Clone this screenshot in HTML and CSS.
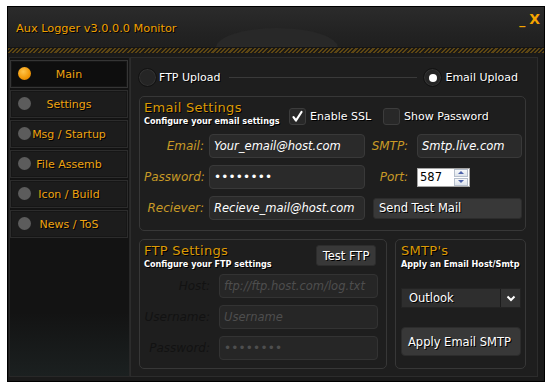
FILE: index.html
```html
<!DOCTYPE html>
<html lang="en">
<head>
<meta charset="utf-8">
<title>Aux Logger v3.0.0.0 Monitor</title>
<link rel="stylesheet" href="styles.css">
</head>
<body>
<div class="window">
  <header class="titlebar">
    <div class="dome"></div>
    <span class="title">Aux Logger v3.0.0.0 Monitor</span>
    <div class="winctl"><span class="min">_</span><span class="close">X</span></div>
  </header>
  <div class="hatch"></div>
  <div class="body">
    <nav class="sidebar">
      <div class="nav-item active"><span class="dot"></span><span>Main</span></div>
      <div class="nav-item"><span class="dot"></span><span>Settings</span></div>
      <div class="nav-item"><span class="dot"></span><span>Msg / Startup</span></div>
      <div class="nav-item"><span class="dot"></span><span>File Assemb</span></div>
      <div class="nav-item"><span class="dot"></span><span>Icon / Build</span></div>
      <div class="nav-item"><span class="dot"></span><span>News / ToS</span></div>
    </nav>
    <main class="panel">
      <div class="mode-row">
        <span class="radio"></span><span class="radio-label">FTP Upload</span>
        <span class="mode-line"></span>
        <span class="radio checked"></span><span class="radio-label last">Email Upload</span>
      </div>

      <section class="group email">
        <div class="group-head">
          <div class="head-text">
            <h2 class="group-title">Email Settings</h2>
            <p class="group-sub">Configure your email settings</p>
          </div>
          <label class="check"><span class="box"><svg width="15" height="15" viewBox="0 0 15 15"><path d="M3.5 8.2 L6 11.5 L11.5 3" fill="none" stroke="#fff" stroke-width="2.2" stroke-linecap="round" stroke-linejoin="round"/></svg></span>Enable SSL</label>
          <label class="check second"><span class="box"></span>Show Password</label>
        </div>
        <div class="form email-form">
          <span class="lbl">Email:</span><span class="field">Your_email@host.com</span>
          <span class="lbl lbl2">SMTP:</span><span class="field">Smtp.live.com</span>
          <span class="lbl">Password:</span><span class="field dots">••••••••</span>
          <span class="lbl lbl2">Port:</span>
          <span class="spin"><span class="spin-val">587</span><span class="spin-btns"><span class="sb up"></span><span class="sb down"></span></span></span>
          <span class="lbl">Reciever:</span><span class="field">Recieve_mail@host.com</span>
          <button class="btn send">Send Test Mail</button>
        </div>
      </section>

      <div class="lower">
        <section class="group ftp">
          <div class="group-head">
            <div class="head-text">
              <h2 class="group-title">FTP Settings</h2>
              <p class="group-sub">Configure your FTP settings</p>
            </div>
            <button class="btn test">Test FTP</button>
          </div>
          <div class="form ftp-form">
            <span class="lbl dis">Host:</span><span class="field off">ftp://ftp.host.com/log.txt</span>
            <span class="lbl dis">Username:</span><span class="field off">Username</span>
            <span class="lbl dis">Password:</span><span class="field off dots">••••••••</span>
          </div>
        </section>
        <section class="group smtp">
          <h2 class="group-title">SMTP's</h2>
          <p class="group-sub">Apply an Email Host/Smtp</p>
          <div class="select">
            <span class="select-val">Outlook</span>
            <span class="select-arrow"><svg width="10" height="7" viewBox="0 0 10 7"><path d="M1.5 1.5 L5 5 L8.5 1.5" fill="none" stroke="#fff" stroke-width="2"/></svg></span>
          </div>
          <button class="btn apply">Apply Email SMTP</button>
        </section>
      </div>
    </main>
  </div>
</div>
</body>
</html>
```
FILE: styles.css
```css
* { box-sizing: border-box; }
body {
  margin: 0;
  padding: 6px 0 0 7px;
  background: #fff;
  font-family: "DejaVu Sans", sans-serif;
}
.window {
  width: 538px;
  height: 376px;
  border: 1px solid #000;
  background: #1a1a1a;
  display: flex;
  flex-direction: column;
}
.titlebar {
  position: relative;
  height: 40px;
  flex: none;
  overflow: hidden;
  background: linear-gradient(#2b2b2b, #232323 60%, #1f1f1f);
  display: flex;
  justify-content: space-between;
  align-items: flex-start;
  padding: 0 4px 0 8px;
}
.dome {
  position: absolute;
  left: 208px;
  top: 21px;
  width: 122px;
  height: 40px;
  border-radius: 50%;
  background: #282828;
}
.title {
  position: relative;
  padding-top: 15px;
  font-size: 11.3px;
  line-height: 13px;
  color: #f0a000;
  text-shadow: 1px 1px 0 #000;
}
.winctl {
  position: relative;
  display: flex;
  align-items: baseline;
  gap: 4px;
  padding-top: 4px;
  font-size: 14px;
  line-height: 16px;
  font-weight: bold;
  color: #f5a400;
}
.min { font-size: 12px; }
.hatch {
  height: 6px;
  flex: none;
  border-top: 1px solid #151515;
  background: repeating-linear-gradient(-45deg, #5e4714 0 1.5px, #1d1a14 1.5px 3px);
}
.body {
  flex: 1;
  min-height: 0;
  display: flex;
  padding: 4px 6px 4px 1px;
}
.sidebar {
  width: 121px;
  flex: none;
  border: 1px solid #282828;
  background: linear-gradient(#131313 80%, #1b2020);
  padding: 2px 1px 0 0;
  display: flex;
  flex-direction: column;
  gap: 2px;
}
.nav-item {
  position: relative;
  height: 28px;
  flex: none;
  border: 1px solid #2c2c2c;
  background: #1c1c1c;
  box-shadow: inset 0 0 0 1px #161616;
  display: flex;
  align-items: center;
  justify-content: center;
  font-size: 11px;
  color: #eea312;
  text-shadow: 1px 1px 0 #000;
}
.nav-item.active {
  background: #0e0e0e;
  border-color: #353535;
}
.dot {
  position: absolute;
  left: 7px;
  top: 6px;
  width: 13px;
  height: 13px;
  border-radius: 50%;
  background: #5c5c5c;
}
.active .dot {
  background: radial-gradient(circle at 40% 35%, #ffc44a, #f39a0a 55%, #d67a00);
}
.panel {
  flex: 1;
  border: 1px solid #2c2c2c;
  background: #1e1e1e;
  padding: 10px 11px 0 8px;
}
.mode-row {
  display: flex;
  align-items: center;
  height: 19px;
  margin-left: -1px;
}
.radio {
  width: 19px;
  height: 19px;
  flex: none;
  border-radius: 50%;
  border: 1px solid #121212;
  background: #252525;
  box-shadow: inset 0 0 0 1px #323232;
  display: flex;
  align-items: center;
  justify-content: center;
}
.radio.checked::after {
  content: "";
  width: 8px;
  height: 8px;
  border-radius: 50%;
  background: #fff;
}
.radio-label {
  margin-left: 2px;
  font-size: 11px;
  color: #fff;
  text-shadow: 1px 1px 0 #000;
}
.radio-label.last { margin-left: 3px; margin-right: 8px; }
.mode-line {
  flex: 1;
  height: 1px;
  background: #3a3a3a;
  margin: 0 6px 0 8px;
}
.group {
  border: 1px solid #373737;
  border-radius: 5px;
}
.email {
  height: 135px;
  margin-top: 9px;
  padding: 3px 3px 0 4px;
}
.group-head {
  display: flex;
  height: 27px;
}
.head-text { width: 145px; flex: none; }
.group-title {
  margin: 0;
  font-size: 13px;
  line-height: 15px;
  font-weight: normal;
  letter-spacing: 0.3px;
  color: #dc9a06;
  text-shadow: 1px 1px 0 #000;
}
.group-sub {
  margin: 1px 0 0;
  font-family: "DejaVu Sans Condensed", "DejaVu Sans", sans-serif;
  font-size: 9px;
  line-height: 10px;
  font-weight: bold;
  color: #fff;
  white-space: nowrap;
  text-shadow: 1px 1px 0 #000;
}
.check {
  display: flex;
  align-items: center;
  gap: 4px;
  align-self: flex-end;
  margin-bottom: 2px;
  font-size: 11px;
  color: #fff;
  text-shadow: 1px 1px 0 #000;
}
.check.second { margin-left: 12px; }
.box {
  width: 17px;
  height: 17px;
  border: 1px solid #3c3c3c;
  border-radius: 3px;
  background: #282828;
  display: flex;
  align-items: center;
  justify-content: center;
}
.form {
  display: grid;
  grid-auto-rows: 24px;
  row-gap: 7px;
  align-items: center;
}
.email-form {
  grid-template-columns: 65px 156px 52px 105px;
  margin-top: 7px;
}
.lbl {
  text-align: right;
  padding-right: 5px;
  font-size: 12px;
  font-style: italic;
  color: #c89a26;
  white-space: nowrap;
}
.lbl2 { padding-right: 9px; }
.field {
  height: 24px;
  border: 1px solid #393939;
  border-radius: 4px;
  background: #2a2a2a;
  padding-left: 4px;
  display: flex;
  align-items: center;
  font-size: 11.5px;
  font-style: italic;
  color: #fff;
  white-space: nowrap;
  overflow: hidden;
}
.field.dots {
  font-style: normal;
  font-size: 12px;
  letter-spacing: 0.2px;
}
.spin {
  width: 53px;
  height: 19px;
  border: 1px solid #a4a4a4;
  background: #fff;
  display: flex;
  align-items: center;
  justify-content: space-between;
  padding-left: 2px;
  font-size: 11.5px;
  color: #000;
}
.spin-btns {
  display: flex;
  flex-direction: column;
  gap: 1px;
  margin-right: 1px;
}
.sb {
  width: 14px;
  height: 8px;
  border: 1px solid #b6bfcc;
  background: linear-gradient(#f6f8fa, #dde3ea);
  display: flex;
  align-items: center;
  justify-content: center;
}
.sb.up::after {
  content: "";
  border-left: 3px solid transparent;
  border-right: 3px solid transparent;
  border-bottom: 3px solid #4d62aa;
}
.sb.down::after {
  content: "";
  border-left: 3px solid transparent;
  border-right: 3px solid transparent;
  border-top: 3px solid #4d62aa;
}
.btn {
  font-family: "DejaVu Sans", sans-serif;
  font-size: 11.5px;
  color: #fff;
  background: #383838;
  border: 1px solid #2c2c2c;
  border-radius: 3px;
  text-align: left;
  padding: 0 0 0 5px;
  text-shadow: 1px 1px 0 #000;
}
.send {
  grid-column: 3 / span 2;
  margin-left: 8px;
  height: 21px;
}
.lower {
  display: flex;
  gap: 8px;
  margin-top: 8px;
}
.ftp {
  width: 248px;
  height: 130px;
  padding: 3px 8px 0 4px;
}
.ftp .head-text { flex: 1; }
.test {
  flex: none;
  width: 60px;
  height: 21px;
  margin: 2px 2px 0 0;
  text-align: center;
  padding: 0;
}
.ftp-form {
  grid-template-columns: 75px 159px;
  margin-top: 4px;
}
.lbl.dis {
  padding-right: 9px;
  color: #121212;
}
.field.off {
  background: #262626;
  border-color: #333;
  color: #4e4e4e;
  text-shadow: none;
}
.smtp {
  flex: 1;
  height: 130px;
  padding: 3px 4px 0 5px;
}
.select {
  display: flex;
  height: 20px;
  margin-top: 19px;
  border: 1px solid #232323;
  background: #2e2e2e;
}
.select-val {
  flex: 1;
  display: flex;
  align-items: center;
  padding-left: 7px;
  font-size: 11.5px;
  color: #fff;
  text-shadow: 1px 1px 0 #000;
}
.select-arrow {
  width: 20px;
  border-left: 1px solid #1c1c1c;
  background: #333;
  display: flex;
  align-items: center;
  justify-content: center;
}
.apply {
  width: 100%;
  height: 29px;
  margin-top: 19px;
  padding-left: 6px;
  border-radius: 4px;
}
```
